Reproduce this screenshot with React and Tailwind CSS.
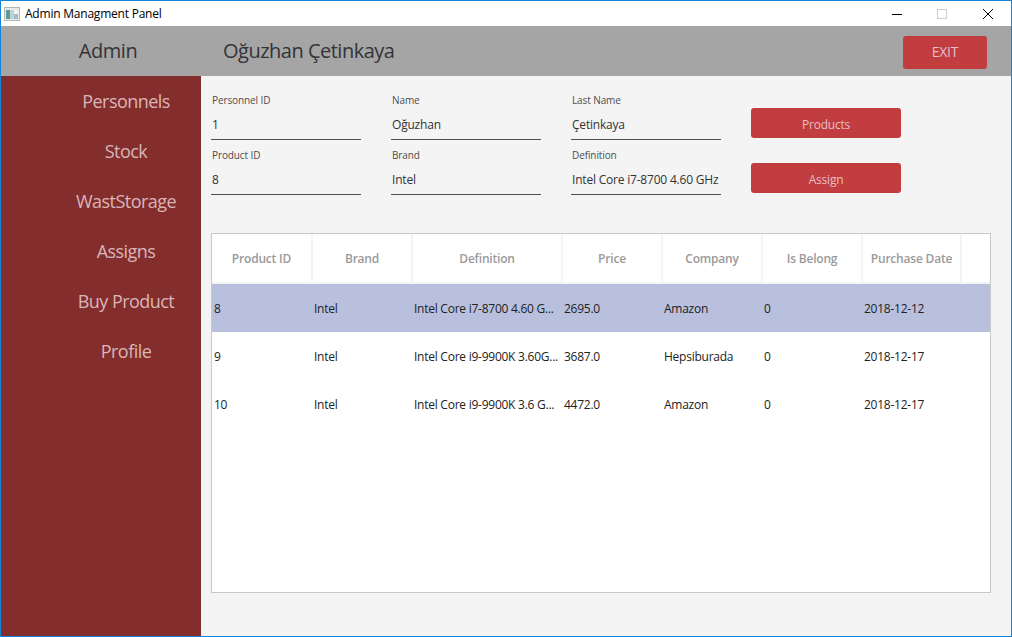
const font = { fontFamily: '"Open Sans", "Noto Sans", sans-serif' };

function Field({ label, value }) {
  return (
    <div className="w-[150px] h-[55px] flex flex-col border-b border-[#4d4d4d]">
      <div className="pl-px pt-[8px] text-[10px] leading-[14px] text-[#4d4d4d] tracking-[-0.1px]">{label}</div>
      <div className="pl-px mt-[9px] text-[12px] leading-[18px] text-[#333333] tracking-[-0.2px] whitespace-nowrap">{value}</div>
    </div>
  );
}

function Btn({ children }) {
  return (
    <div className="w-[150px] h-[30px] pt-[3px] rounded-[3px] bg-[#c23d3f] text-[#e6bfc4] text-[12px] flex items-center justify-center tracking-[-0.2px]">
      {children}
    </div>
  );
}

const cols = [
  ["Product ID", "w-[101px]"],
  ["Brand", "w-[100px]"],
  ["Definition", "w-[150px]"],
  ["Price", "w-[100px]"],
  ["Company", "w-[100px]"],
  ["Is Belong", "w-[100px]"],
  ["Purchase Date", "w-[99px]"],
];

const rows = [
  ["8", "Intel", "Intel Core i7-8700 4.60 G...", "2695.0", "Amazon", "0", "2018-12-12"],
  ["9", "Intel", "Intel Core i9-9900K 3.60G...", "3687.0", "Hepsiburada", "0", "2018-12-17"],
  ["10", "Intel", "Intel Core i9-9900K 3.6 G...", "4472.0", "Amazon", "0", "2018-12-17"],
];

export default function App() {
  return (
    <div style={font} className="w-[1012px] h-[637px] border border-[#1883d7] flex flex-col overflow-hidden bg-[#f4f4f4]">
      <div className="h-[25px] shrink-0 bg-white flex items-center">
        <svg width="16" height="16" viewBox="0 0 16 16" className="ml-[3px] shrink-0">
          <rect x="0.5" y="1.5" width="15" height="13" fill="#e8eaea" stroke="#b4b8b8" />
          <rect x="2" y="4" width="4" height="9" fill="#5f9a94" />
          <rect x="6" y="4" width="4" height="9" fill="#b9d4d8" />
          <rect x="10" y="4" width="4" height="4" fill="#f1f4f4" />
          <rect x="10" y="8" width="4" height="5" fill="#a3bcc8" />
        </svg>
        <span className="ml-[5px] text-[12px] text-black tracking-[-0.22px]">Admin Managment Panel</span>
        <div className="ml-auto flex items-center">
          <svg width="12" height="12" viewBox="0 0 12 12" className="mr-[33px]"><path d="M1 6.5h10" stroke="#000" /></svg>
          <svg width="12" height="12" viewBox="0 0 12 12" className="mr-[34px]"><rect x="1.5" y="1.5" width="9" height="9" fill="none" stroke="#cccccc" /></svg>
          <svg width="12" height="12" viewBox="0 0 12 12" className="mr-[17px]"><path d="M1 1l10 10M11 1L1 11" stroke="#000" /></svg>
        </div>
      </div>

      <div className="h-[50px] shrink-0 bg-[#a5a5a5] flex items-center text-[#333338]">
        <div className="w-[200px] pl-[14px] text-center text-[20px] tracking-[-0.4px]">Admin</div>
        <div className="ml-[22px] text-[20px] tracking-[-0.5px]">Oğuzhan Çetinkaya</div>
        <div className="ml-auto mr-[24px] mt-[2px] pb-[2px] w-[84px] h-[33px] rounded-[3px] bg-[#c23d3f] text-[#e6bfd0] text-[14px] flex items-center justify-center tracking-[-0.3px]">EXIT</div>
      </div>

      <div className="flex-1 flex min-h-0">
        <div className="w-[200px] shrink-0 bg-[#842d2d] flex flex-col items-center text-[#d9b5b8] text-[18px] tracking-[-0.55px]">
          {["Personnels", "Stock", "WastStorage", "Assigns", "Buy Product", "Profile"].map((t) => (
            <div key={t} className="h-[50px] flex items-center justify-center w-full pl-[50px]">{t}</div>
          ))}
        </div>

        <div className="flex-1 pl-[10px] pt-[9px] pr-[20px]">
          <div className="flex gap-[30px]">
            <div className="flex flex-col">
              <Field label="Personnel ID" value="1" />
              <Field label="Product ID" value="8" />
            </div>
            <div className="flex flex-col">
              <Field label="Name" value="Oğuzhan" />
              <Field label="Brand" value="Intel" />
            </div>
            <div className="flex flex-col">
              <Field label="Last Name" value="Çetinkaya" />
              <Field label="Definition" value="Intel Core i7-8700 4.60 GHz" />
            </div>
            <div className="flex flex-col gap-[25px] pt-[23px]">
              <Btn>Products</Btn>
              <Btn>Assign</Btn>
            </div>
          </div>

          <div className="mt-[38px] h-[360px] w-[780px] border border-[#c8c8c8] bg-white">
            <div className="h-[50px] flex border-b-2 border-[#f4f4f4]">
              {cols.map(([c, w]) => (
                <div key={c} className={`${w} pt-[1px] border-r-2 border-[#f4f4f4] flex items-center justify-center text-[12px] font-semibold text-[#9a9a9a] tracking-[-0.2px] whitespace-nowrap`}>
                  {c}
                </div>
              ))}
            </div>
            {rows.map((r, i) => (
              <div key={r[0]} className={`h-[48px] pt-[2px] flex items-center text-[12px] text-[#222222] tracking-[-0.25px] ${i === 0 ? "bg-[#b9c0dd]" : ""}`}>
                {r.map((v, j) => (
                  <div key={j} className={`${cols[j][1]} ${j === 0 ? "pl-[2px]" : "pl-[1px]"} whitespace-nowrap overflow-hidden`}>
                    {v}
                  </div>
                ))}
              </div>
            ))}
          </div>
        </div>
      </div>
    </div>
  );
}
